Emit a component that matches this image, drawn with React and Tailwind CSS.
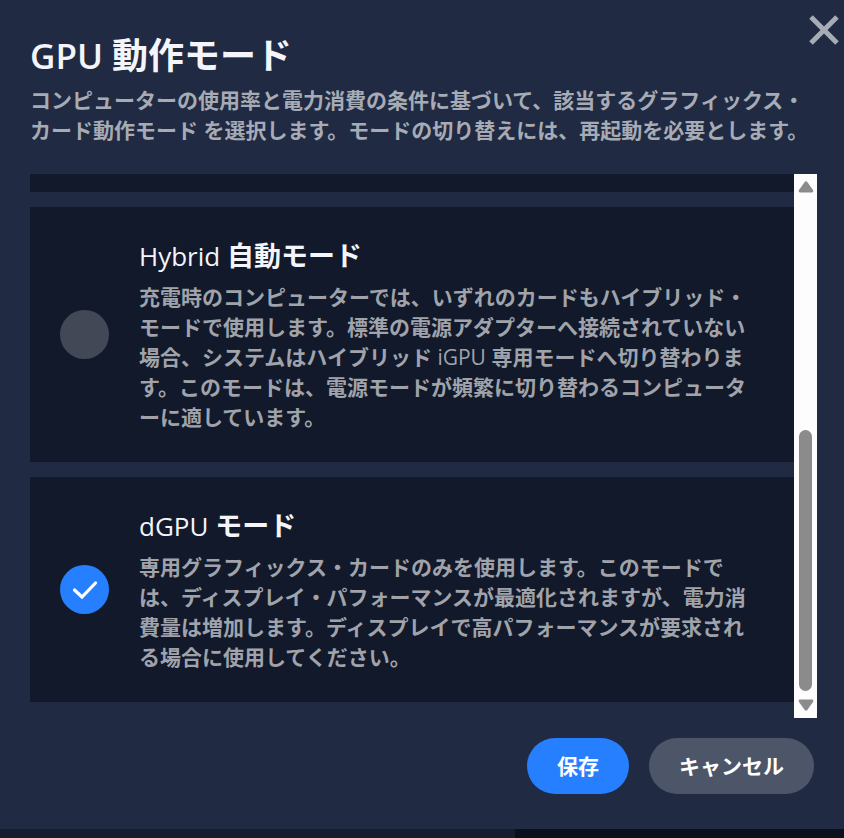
import React, { useState } from "react";

const MODES = [
  {
    id: "hybrid-auto",
    latin: "Hybrid",
    title: "自動モード",
    lines: [
      "充電時のコンピューターでは、いずれのカードもハイブリッド・",
      "モードで使用します。標準の電源アダプターへ接続されていない",
      <>場合、システムはハイブリッド <span className="font-normal">iGPU</span> 専用モードへ切り替わりま</>,
      "す。このモードは、電源モードが頻繁に切り替わるコンピュータ",
      "ーに適しています。",
    ],
  },
  {
    id: "dgpu",
    latin: "dGPU",
    title: "モード",
    lines: [
      "専用グラフィックス・カードのみを使用します。このモードで",
      "は、ディスプレイ・パフォーマンスが最適化されますが、電力消",
      "費量は増加します。ディスプレイで高パフォーマンスが要求され",
      "る場合に使用してください。",
    ],
  },
];

// ── Mode card with a round radio ──
const ModeCard = ({ mode, checked, onSelect }) => (
  <label htmlFor={mode.id} className="flex items-center gap-[30px] bg-[#11192b] p-[30px] cursor-pointer">
    <span className="grid shrink-0 place-items-center">
      <input
        type="radio"
        id={mode.id}
        name="gpu-mode"
        checked={checked}
        onChange={onSelect}
        className="col-start-1 row-start-1 size-[49px] appearance-none rounded-full bg-[#434857] checked:bg-[#267fff]"
      />
      {checked && (
        <svg viewBox="0 0 26 20" className="pointer-events-none col-start-1 row-start-1 h-5 w-[26px]" fill="none">
          <path d="M2.5 10 L10 17 L23.5 3" stroke="#fff" strokeWidth="3.2" strokeLinecap="round" strokeLinejoin="miter" />
        </svg>
      )}
    </span>
    <span className="min-w-0 flex-1">
      <span className="mb-[7px] block text-[27px] leading-[38px] whitespace-nowrap text-[#f3f5fa]">
        <span className="text-[26px] font-normal">{mode.latin} </span>
        <span className="font-bold">{mode.title}</span>
      </span>
      <span className="block text-[21px] leading-[30px] font-bold whitespace-nowrap text-[#a0a3aa]">
        {mode.lines.map((line, i) => (
          <span key={i} className="block">{line}</span>
        ))}
      </span>
    </span>
  </label>
);

// ── Scrollbar ──
const Scrollbar = () => (
  <div aria-hidden="true" className="flex w-[23px] shrink-0 flex-col items-center bg-[#fdfdfd] py-[7px]">
    <svg viewBox="0 0 16 12" className="h-3 w-4" fill="#8b8b8b">
      <path d="M6.7 0.9 Q8 -0.6 9.3 0.9 L15 9 Q16 11.4 14 11.5 L2 11.5 Q0 11.4 1 9 Z" />
    </svg>
    <div className="flex-1" />
    <div className="h-[261px] w-[13px] rounded-full bg-[#8b8b8b]" />
    <svg viewBox="0 0 16 12" className="mt-2 h-3 w-4" fill="#8b8b8b">
      <path d="M6.7 11.1 Q8 12.6 9.3 11.1 L15 3 Q16 0.6 14 0.5 L2 0.5 Q0 0.6 1 3 Z" />
    </svg>
  </div>
);

export default function App() {
  const [selected, setSelected] = useState("dgpu");

  return (
    <div
      lang="ja"
      className="flex min-h-screen flex-col bg-[#11192b] font-['Open_Sans','Noto_Sans_CJK_JP',sans-serif]"
    >
      <main className="relative bg-[#202a42] pt-9 pb-[35px]">
        <button type="button" aria-label="閉じる" className="absolute top-[15px] right-[5px]">
          <svg viewBox="0 0 30 30" className="size-[30px]" fill="none">
            <path d="M2 2 L28 28 M28 2 L2 28" stroke="#a6abb5" strokeWidth="5" />
          </svg>
        </button>

        {/* Header */}
        <header className="px-[30px]">
          <h1 className="mb-[9px] text-[36px] leading-10 text-[#f3f5fa]">
            <span className="text-[35px] font-semibold">GPU </span>
            <span className="font-bold">動作モード</span>
          </h1>
          <p className="text-[21px] leading-[30px] font-bold whitespace-nowrap text-[#a6abb5]">
            コンピューターの使用率と電力消費の条件に基づいて、該当するグラフィックス・
            <br />
            カード動作モード を選択します。モードの切り替えには、再起動を必要とします。
          </p>
        </header>

        {/* Mode list */}
        <section className="mt-[29px] mr-[27px] ml-[30px] flex">
          <div className="flex min-w-0 flex-1 flex-col gap-[15px] pb-4">
            <div className="h-[18px] bg-[#11192b]" />
            {MODES.map((mode) => (
              <ModeCard
                key={mode.id}
                mode={mode}
                checked={selected === mode.id}
                onSelect={() => setSelected(mode.id)}
              />
            ))}
          </div>
          <Scrollbar />
        </section>

        {/* Actions */}
        <footer className="mt-5 flex justify-end gap-5 px-[30px] text-[21px] leading-[30px] font-bold text-white">
          <button type="button" className="rounded-full bg-[#267fff] px-[30px] py-[13px]">保存</button>
          <button type="button" className="rounded-full bg-[#4c5668] px-[30px] py-[13px]">キャンセル</button>
        </footer>
      </main>

      {/* Page behind the dialog */}
      <div className="flex flex-1">
        <div className="w-[61%] bg-[#151d2f]" />
        <div className="flex-1 bg-[#0b101d]" />
      </div>
    </div>
  );
}
